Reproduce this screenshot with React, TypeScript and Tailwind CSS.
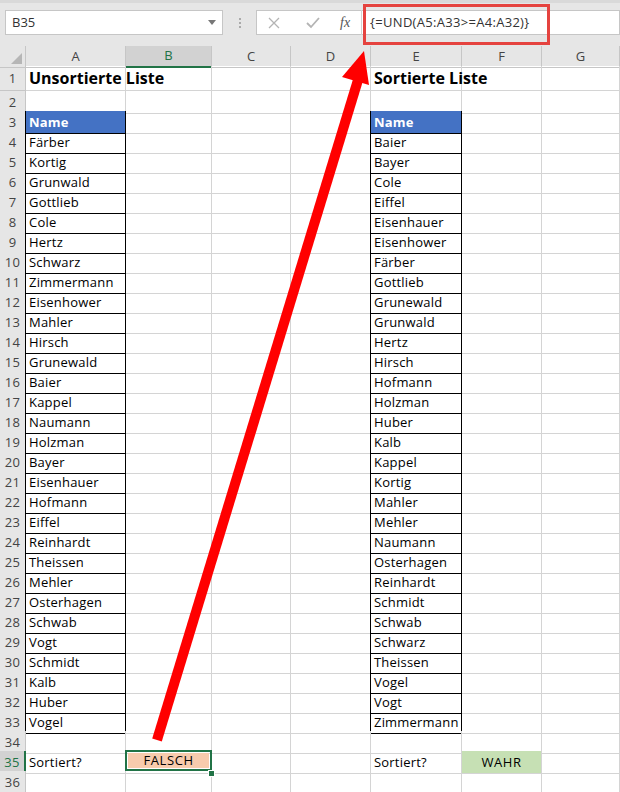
import React from 'react'

const left = ['Färber', 'Kortig', 'Grunwald', 'Gottlieb', 'Cole', 'Hertz', 'Schwarz', 'Zimmermann', 'Eisenhower', 'Mahler', 'Hirsch', 'Grunewald', 'Baier', 'Kappel', 'Naumann', 'Holzman', 'Bayer', 'Eisenhauer', 'Hofmann', 'Eiffel', 'Reinhardt', 'Theissen', 'Mehler', 'Osterhagen', 'Schwab', 'Vogt', 'Schmidt', 'Kalb', 'Huber', 'Vogel']
const right = ['Baier', 'Bayer', 'Cole', 'Eiffel', 'Eisenhauer', 'Eisenhower', 'Färber', 'Gottlieb', 'Grunewald', 'Grunwald', 'Hertz', 'Hirsch', 'Hofmann', 'Holzman', 'Huber', 'Kalb', 'Kappel', 'Kortig', 'Mahler', 'Mehler', 'Naumann', 'Osterhagen', 'Reinhardt', 'Schmidt', 'Schwab', 'Schwarz', 'Theissen', 'Vogel', 'Vogt', 'Zimmermann']

const cols = ['A', 'B', 'C', 'D', 'E', 'F', 'G']
const grid = 'grid grid-cols-[26px_100px_86px_79px_80px_91px_80px_1fr]'

function Toolbar() {
  return (
    <div className="h-[46px] bg-[#e6e6e6] relative">
      <div className="h-[3px] bg-[#d9d9d9]" />
      <div className="flex items-start pt-[7px]">
        <div className="ml-[5px] w-[218px] h-[25px] bg-white border border-[#c6c6c6] flex items-center px-[6px] text-[13px] text-[#333]">
          <span className="flex-1">B35</span>
          <svg width="8" height="5" viewBox="0 0 8 5"><path d="M0 0h8L4 5z" fill="#777" /></svg>
        </div>
        <div className="w-[33px] h-[25px] flex flex-col items-center justify-center gap-[2px]">
          <span className="w-[2px] h-[2px] bg-[#aaa]" />
          <span className="w-[2px] h-[2px] bg-[#aaa]" />
          <span className="w-[2px] h-[2px] bg-[#aaa]" />
        </div>
        <div className="flex-1 h-[25px] bg-white border border-[#c6c6c6] flex items-center">
          <svg className="ml-[11px]" width="12" height="12" viewBox="0 0 12 12"><path d="M1 1l10 10M11 1L1 11" stroke="#b4b4b4" strokeWidth="1.3" /></svg>
          <svg className="ml-[26px]" width="14" height="12" viewBox="0 0 14 12"><path d="M1 6l4 4 8-9" stroke="#b4b4b4" strokeWidth="1.8" fill="none" /></svg>
          <span className="ml-[20px] text-[14px] italic text-[#555]" style={{ fontFamily: '"Liberation Serif", serif' }}>fx</span>
          <span className="ml-[11px] w-px h-[25px] bg-[#d4d4d4]" />
          <span className="ml-[8px] text-[13px] text-[#333] tracking-[0.3px]">{'{=UND(A5:A33>=A4:A32)}'}</span>
        </div>
      </div>
    </div>
  )
}

function ColHeader() {
  return (
    <div className={`${grid} h-[20px] bg-[#e6e6e6] text-[13px] text-[#444]`}>
      <div className="relative border-r border-b border-[#c6c6c6]">
        <svg className="absolute right-[3px] bottom-[3px]" width="11" height="11" viewBox="0 0 11 11"><path d="M11 0v11H0z" fill="#b6b6b6" /></svg>
      </div>
      {cols.map((c) =>
        c === 'B' ? (
          <div key={c} className="flex items-center justify-center bg-[#d2d2d2] text-[#217346] border-r border-[#c6c6c6] border-b-2 border-b-[#217346]">{c}</div>
        ) : (
          <div key={c} className="flex items-center justify-center border-r border-b border-[#c6c6c6]">{c}</div>
        )
      )}
    </div>
  )
}

function Cell({ children, className = '', pad = 'pt-[2px]' }: { children?: React.ReactNode; className?: string; pad?: string }) {
  return <div className={`flex items-center px-[3px] ${pad} whitespace-nowrap overflow-visible border-r border-b border-[#d4d4d4] ${className}`}>{children}</div>
}

function SheetRow({ n }: { n: number }) {
  const inList = n >= 3 && n <= 33
  const h = n === 1 ? 'h-[25px]' : 'h-[20px]'
  const listCls = 'border-r-black border-b-black'
  const header = n === 3
  const val = (arr: string[]) => (n >= 4 && n <= 33 ? arr[n - 4] : '')

  const rowHead =
    n === 35 ? (
      <div className="flex items-center justify-center pt-[2px] bg-[#d2d2d2] text-[#217346] border-b border-[#c6c6c6] border-r-2 border-r-[#217346]">{n}</div>
    ) : (
      <div className={`flex items-center justify-center pt-[2px] bg-[#e6e6e6] text-[#444] border-b border-r border-[#c6c6c6] ${inList ? 'border-r-black' : ''}`}>{n}</div>
    )

  const listCell = (arr: string[]) =>
    header ? (
      <Cell className={`bg-[#4472c4] text-white font-bold ${listCls}`}>Name</Cell>
    ) : (
      <Cell className={listCls}>{val(arr)}</Cell>
    )

  let a: React.ReactNode = <Cell />
  let b: React.ReactNode = <Cell />
  let d: React.ReactNode = <Cell />
  let e: React.ReactNode = <Cell />
  let f: React.ReactNode = <Cell />

  if (n === 1) {
    a = <Cell pad="pt-0" className="text-[16px] font-bold tracking-normal">Unsortierte Liste</Cell>
    e = <Cell pad="pt-0" className="text-[16px] font-bold tracking-normal">Sortierte Liste</Cell>
  }
  if (n === 2) {
    a = <Cell className="border-b-2 border-b-black" />
    e = <Cell className="border-b-2 border-b-black" />
  }
  if (inList) {
    a = listCell(left)
    e = listCell(right)
    d = <Cell className="border-r-black" />
  }
  if (n === 35) {
    a = <Cell>Sortiert?</Cell>
    e = <Cell>Sortiert?</Cell>
    b = (
      <div className="relative border-r border-b border-[#d4d4d4]">
        <div className="absolute -left-px -top-px w-[87px] h-[21px] border-2 border-[#217346] p-px">
          <div className="w-full h-full bg-[#f8cbad] flex items-center justify-center pt-[1px] tracking-[0.6px]">FALSCH</div>
        </div>
        <div className="absolute -right-[4px] -bottom-[4px] w-[7px] h-[7px] bg-[#217346] border border-white" />
      </div>
    )
    f = (
      <div className="flex items-center justify-center pt-[2px] bg-[#c6e0b4] border-r border-b border-[#d4d4d4] tracking-[0.6px]">WAHR</div>
    )
  }

  return (
    <div className={`${grid} ${h} text-[13px] text-black tracking-[0.2px]`}>
      {rowHead}
      {a}
      {b}
      <Cell />
      {d}
      {e}
      {f}
      <Cell />
    </div>
  )
}

export default function App() {
  const rows = Array.from({ length: 36 }, (_, i) => i + 1)
  return (
    <div className="relative w-[620px] h-[792px] overflow-hidden bg-white" style={{ fontFamily: '"Open Sans", "Noto Sans", sans-serif' }}>
      <Toolbar />
      <ColHeader />
      {rows.map((n) => (
        <SheetRow key={n} n={n} />
      ))}
      <svg className="absolute inset-0 pointer-events-none" width="620" height="792" viewBox="0 0 620 792">
        <rect x="364.5" y="5.5" width="184" height="38" fill="none" stroke="#e5433f" strokeWidth="3" />
        <line x1="157" y1="740" x2="358" y2="80" stroke="#ff0000" strokeWidth="10" />
        <polygon points="364,51 369,85 342,77" fill="#ff0000" />
      </svg>
    </div>
  )
}
